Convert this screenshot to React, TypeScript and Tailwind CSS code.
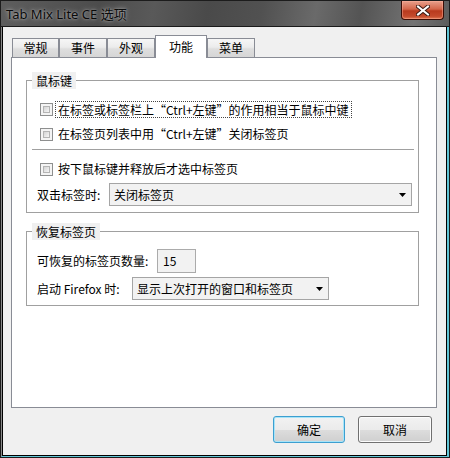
import React from "react"

const tabs = [
  { label: "常规", w: "w-[47px]" },
  { label: "事件", w: "w-[48px]" },
  { label: "外观", w: "w-[48px]" },
  { label: "功能", w: "w-[52px]", active: true },
  { label: "菜单", w: "w-[48px]" },
]

function Checkbox() {
  return (
    <span className="w-[13px] h-[13px] shrink-0 border border-[#8e8f8f] bg-[#f4f4f4] p-[2px]">
      <span className="block h-full border border-[#b4b4b4] bg-[linear-gradient(135deg,#d4d4d4,#f6f6f6)]" />
    </span>
  )
}

function Arrow() {
  return (
    <svg width="7" height="4" viewBox="0 0 7 4" className="shrink-0">
      <path d="M0 0h7L3.5 4z" fill="#000" />
    </svg>
  )
}

function Select({ value, w, pr }: { value: string; w: string; pr: string }) {
  return (
    <div className={`${w} ${pr} h-[23px] flex items-center justify-between pl-[4px] border border-[#a5a5a5] bg-[#f2f2f2]`}>
      <span>{value}</span>
      <Arrow />
    </div>
  )
}

export default function App() {
  return (
    <div className="w-[450px] h-[458px] flex flex-col border border-[#1c1c1c] bg-[#4f4f4f] font-['Noto_Sans_CJK_SC','Noto_Sans',sans-serif] text-[12px] text-black">
      {/* Title bar */}
      <div className="h-[26px] shrink-0 flex justify-between border-b border-[#1a1a1a] pl-[5px] pr-[5px] bg-[linear-gradient(100deg,#5e5e5e_0%,#4c4c4c_22%,#595959_34%,#4a4a4a_46%,#515151_58%,#6a6a6a_70%,#545454_80%,#737373_92%,#5c5c5c_100%)]">
        <span className="mt-[4px] text-[13px] leading-[18px] font-['Noto_Sans','Noto_Sans_CJK_SC',sans-serif] text-[#0a0a0a] [text-shadow:0_0_5px_rgba(255,255,255,0.55),0_0_2px_rgba(255,255,255,0.4)]">
          Tab Mix Lite CE 选项
        </span>
        <div className="w-[43px] h-[19px] flex items-center justify-center rounded-b-[4px] border border-t-0 border-[#3b0d06] shadow-[inset_0_0_0_1px_rgba(255,180,160,0.45)] bg-[linear-gradient(#e8a08c,#d4664a_45%,#b93a1e_55%,#c44a2c_85%,#e27a55)]">
          <svg width="14" height="11" viewBox="0 0 14 11">
            <path d="M2 1.5L12 9.5M12 1.5L2 9.5" stroke="#3a1a14" strokeWidth="4" strokeLinecap="square" />
            <path d="M2 1.5L12 9.5M12 1.5L2 9.5" stroke="#fff" strokeWidth="2" strokeLinecap="square" />
          </svg>
        </div>
      </div>

      {/* Body */}
      <div className="flex-1 flex flex-col border-l border-r-2 border-b border-l-[#8a8a8a] border-r-[#62c6d6] border-b-[#62c6d6]">
        <div className="flex-1 flex flex-col border-l border-r border-b border-black bg-[#f0f0f0] pl-[8px] pt-[8px]">
          {/* Tabs */}
          <div className="h-[22px] flex items-end ml-px">
            {tabs.map((t) =>
              t.active ? (
                <div
                  key={t.label}
                  className={`${t.w} h-[23px] -mb-px relative z-10 flex items-start justify-center pt-[2px] border border-b-0 border-[#898c95] bg-white`}
                >
                  {t.label}
                </div>
              ) : (
                <div
                  key={t.label}
                  className={`${t.w} h-[19px] flex items-center justify-center border border-b-0 border-[#898c95] bg-[linear-gradient(#f6f6f6,#ececec_45%,#dedede_55%,#d6d6d6)]`}
                >
                  {t.label}
                </div>
              )
            )}
          </div>

          {/* Panel */}
          <div className="w-[426px] h-[351px] border border-[#898c95] bg-white pl-[14px]">
            {/* 鼠标键 */}
            <fieldset className="w-[393px] mt-[14px] border border-[#a0a0a0]">
              <legend className="ml-[5px] px-[4px] h-[17px] leading-[17px] bg-[#f0f0f0]">鼠标键</legend>
              <div className="flex flex-col pt-[11px] pb-[6px]">
                <div className="h-[18px] flex items-center pl-[13px]">
                  <Checkbox />
                  <span className="ml-[2px] px-[2px] h-[17px] leading-[15px] border border-dotted border-[#444]">
                    在标签或标签栏上“Ctrl+左键”的作用相当于鼠标中键
                  </span>
                </div>
                <div className="h-[18px] mt-[7px] flex items-center pl-[13px]">
                  <Checkbox />
                  <span className="ml-[2px] px-[3px]">在标签页列表中用“Ctrl+左键”关闭标签页</span>
                </div>
                <div className="h-px mt-[6px] ml-[5px] w-[382px] bg-[#a0a0a0]" />
                <div className="h-[18px] mt-[10px] flex items-center pl-[13px]">
                  <Checkbox />
                  <span className="ml-[2px] px-[3px]">按下鼠标键并释放后才选中标签页</span>
                </div>
                <div className="h-[23px] mt-[5px] flex items-center pl-[10px]">
                  <span className="w-[72px]">双击标签时:</span>
                  <Select value="关闭标签页" w="w-[303px]" pr="pr-[5px]" />
                </div>
              </div>
            </fieldset>

            {/* 恢复标签页 */}
            <fieldset className="w-[393px] mt-[10px] border border-[#a0a0a0]">
              <legend className="ml-[5px] px-[4px] h-[17px] leading-[17px] bg-[#f0f0f0]">恢复标签页</legend>
              <div className="flex flex-col pt-[9px] pb-[5px]">
                <div className="h-[24px] flex items-center pl-[10px]">
                  <span className="w-[120px]">可恢复的标签页数量:</span>
                  <div className="w-[39px] h-[24px] flex items-center pl-[5px] border border-[#ababab] bg-[#f2f2f2]">15</div>
                </div>
                <div className="h-[23px] mt-[4px] flex items-center pl-[10px]">
                  <span className="w-[95px]">启动 Firefox 时:</span>
                  <Select value="显示上次打开的窗口和标签页" w="w-[197px]" pr="pr-[5px]" />
                </div>
              </div>
            </fieldset>
          </div>

          {/* Buttons */}
          <div className="w-[426px] mt-[8px] pr-[5px] flex justify-end gap-[13px]">
            <button className="w-[72px] h-[27px] rounded-[3px] border border-[#3c9fd0] shadow-[inset_0_0_0_1px_#a8e4f8] bg-[linear-gradient(#f2f2f2,#ebebeb_50%,#dddddd_50%,#cfcfcf)]">
              确定
            </button>
            <button className="w-[74px] h-[27px] rounded-[3px] border border-[#707070] shadow-[inset_0_0_0_1px_#fcfcfc] bg-[linear-gradient(#f2f2f2,#ebebeb_50%,#dddddd_50%,#cfcfcf)]">
              取消
            </button>
          </div>
        </div>
      </div>
    </div>
  )
}
